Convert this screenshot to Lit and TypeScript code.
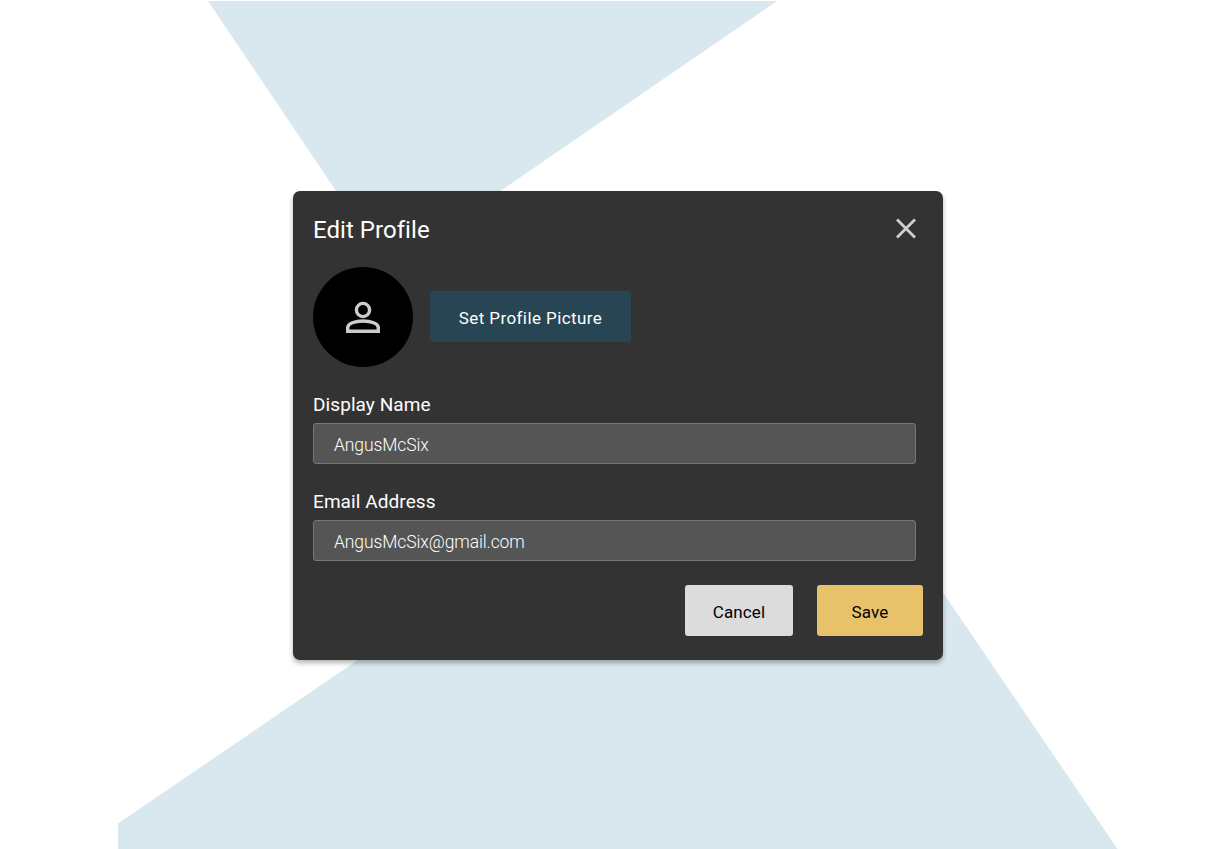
import { LitElement, html, css, svg } from "lit";
import { customElement } from "lit/decorators.js";

@customElement("app-root")
export class AppRoot extends LitElement {
  static styles = css`
    :host {
      display: block;
      position: relative;
      width: 100%;
      height: 849px;
      overflow: hidden;
      background: #fff;
      font-family: "Roboto", "Liberation Sans", sans-serif;
    }
    .bg {
      position: absolute;
      inset: 0;
      width: 1226px;
      height: 849px;
    }
    .bg polygon { fill: #d9e7ee; }
    .page {
      position: relative;
      padding: 191px 0 0 293px;
    }
    .modal {
      box-sizing: border-box;
      width: 650px;
      height: 469px;
      background: #333333;
      border-radius: 7px;
      box-shadow: 0 3px 5px rgba(0, 0, 0, 0.3);
      padding: 0 20px;
      display: flex;
      flex-direction: column;
      color: #fff;
    }
    .head {
      height: 76px;
      display: flex;
      align-items: center;
      justify-content: space-between;
    }
    h1 {
      margin: 2px 0 0;
      font-size: 24px;
      font-weight: 400;
      letter-spacing: 0.05px;
      line-height: 28px;
    }
    .close {
      display: block;
      margin-right: 5px;
      width: 24px;
      height: 24px;
    }
    .avatar-row {
      display: flex;
      align-items: center;
      gap: 17px;
      height: 100px;
    }
    .avatar {
      width: 100px;
      height: 100px;
      border-radius: 50%;
      background: #000;
      display: flex;
      align-items: center;
      justify-content: center;
    }
    .btn {
      box-sizing: border-box;
      height: 51px;
      border-radius: 3px;
      display: flex;
      align-items: center;
      justify-content: center;
      padding-top: 2px;
      font-size: 17px;
      letter-spacing: 0.1px;
    }
    .set {
      width: 201px;
      margin-bottom: 1px;
      background: #274553;
      color: #fff;
      letter-spacing: 0.42px;
    }
    .field { display: flex; flex-direction: column; width: 603px; }
    .f1 { margin-top: 25px; }
    .f2 { margin-top: 25px; }
    label {
      height: 30px;
      padding-top: 1px;
      font-size: 19px;
      line-height: 24px;
      letter-spacing: 0.08px;
    }
    input {
      box-sizing: border-box;
      width: 100%;
      height: 41px;
      background: #555555;
      border: 1px solid #777777;
      border-radius: 3px;
      padding: 2px 20px 0;
      color: #ffffff;
      font: 300 17.5px "Roboto", "Liberation Sans", sans-serif;
      letter-spacing: -0.1px;
      outline: none;
    }
    .actions {
      display: flex;
      justify-content: flex-end;
      gap: 24px;
      margin-top: 24px;
    }
    .cancel { width: 108px; background: #dcdcdc; color: #000; }
    .save { width: 106px; background: #e8c26a; color: #000; }
  `;

  render() {
    return html`
      <svg class="bg" viewBox="0 0 1226 849" aria-hidden="true">
        ${svg`<polygon points="208,1 777,1 388,268"></polygon>
        <polygon points="118,823.5 500,563 880,500 1117.5,849 118,849"></polygon>`}
      </svg>
      <div class="page">
        <section class="modal">
          <div class="head">
            <h1>Edit Profile</h1>
            <svg class="close" viewBox="0 0 24 24" aria-label="Close">
              <path d="M3 2.5 L21 20.5 M21 2.5 L3 20.5" stroke="#cfcfcf" stroke-width="2.8" fill="none"></path>
            </svg>
          </div>
          <div class="avatar-row">
            <div class="avatar">
              <svg width="36" height="36" viewBox="0 0 36 36" aria-hidden="true">
                <circle cx="18" cy="11" r="6.6" fill="none" stroke="#cccccc" stroke-width="3.4"></circle>
                <path d="M2.7 32.3 V28.5 C2.7 24.5 10 22 18 22 C26 22 33.3 24.5 33.3 28.5 V32.3 Z" fill="none" stroke="#cccccc" stroke-width="3.4"></path>
              </svg>
            </div>
            <div class="btn set">Set Profile Picture</div>
          </div>
          <div class="field f1">
            <label>Display Name</label>
            <input .value=${"AngusMcSix"} />
          </div>
          <div class="field f2">
            <label>Email Address</label>
            <input .value=${"AngusMcSix@gmail.com"} />
          </div>
          <div class="actions">
            <div class="btn cancel">Cancel</div>
            <div class="btn save">Save</div>
          </div>
        </section>
      </div>
    `;
  }
}
